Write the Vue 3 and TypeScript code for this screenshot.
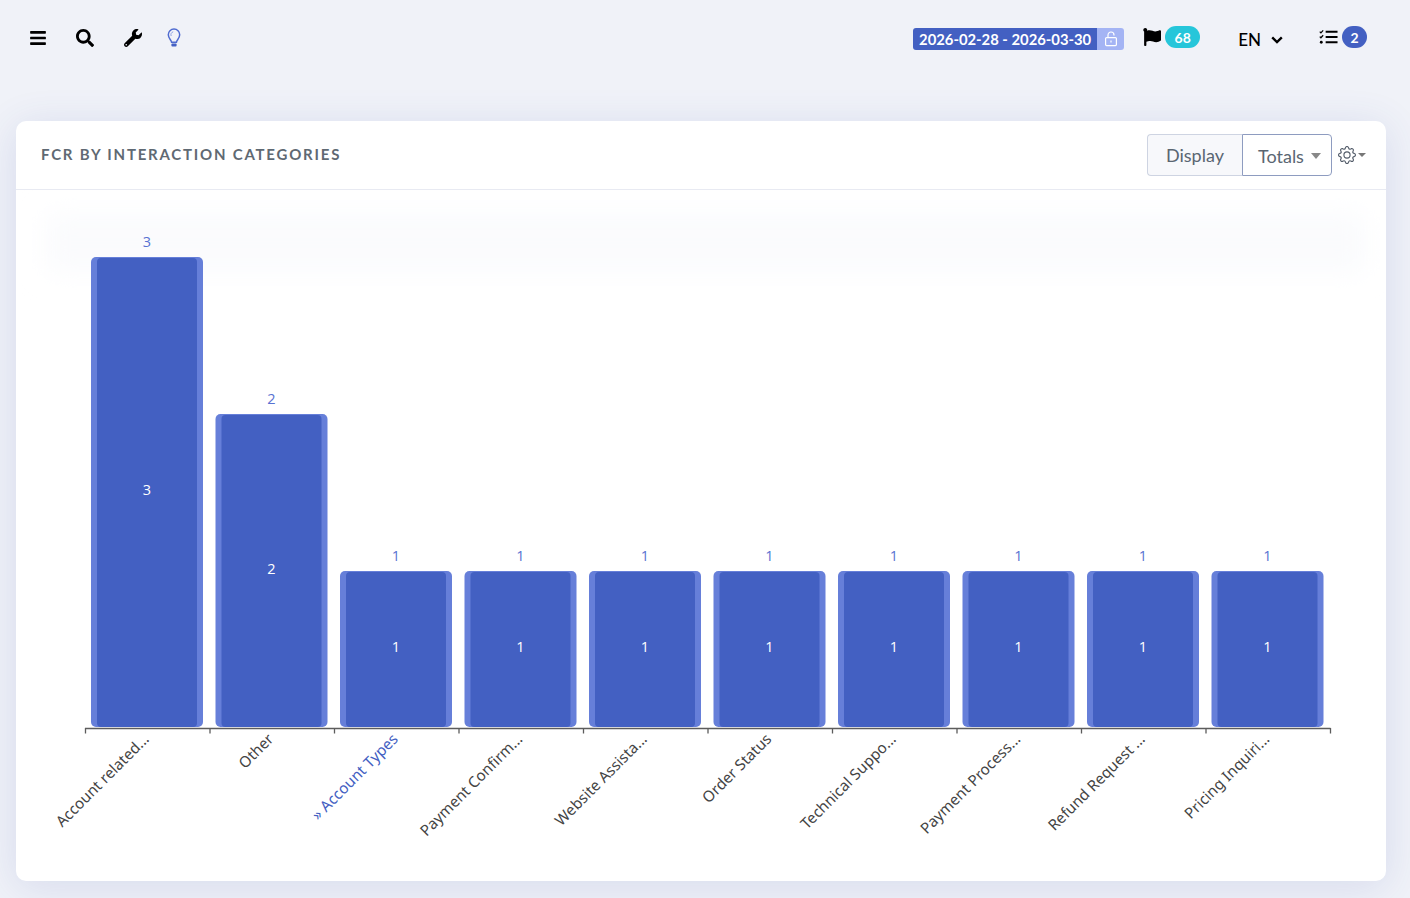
<template>
  <div class="page">
    <header class="topbar">
      <div class="tools">
        <svg class="ico" width="16" height="18" viewBox="0 0 448 512"><path :d="icons.bars" /></svg>
        <svg class="ico" width="18" height="18" viewBox="0 0 512 512"><path :d="icons.search" /></svg>
        <svg class="ico" width="18" height="18" viewBox="0 0 512 512"><path :d="icons.wrench" /></svg>
        <svg class="ico bulb" width="14" height="20" viewBox="0 0 14 20" fill="none">
          <path d="M4.6 14.2c0-2-3.3-3.6-3.3-7.4a5.7 5.7 0 0 1 11.4 0c0 3.8-3.3 5.4-3.3 7.4z" stroke="#4f6bd0" stroke-width="1.5" />
          <path d="M4.2 8a3 3 0 0 1 2-4.2" stroke="#8fa2e4" stroke-width="1" />
          <rect x="4.4" y="15.4" width="5.2" height="3" rx="1" fill="#4460c4" />
        </svg>
      </div>
      <div class="status">
        <div class="range">
          <span class="range-text">2026-02-28 - 2026-03-30</span>
          <span class="range-lock">
            <svg width="14" height="16" viewBox="0 0 14 16" fill="none" stroke="#fff" stroke-width="1.2">
              <rect x="1.6" y="6.6" width="10.8" height="8" rx="1" />
              <path d="M4 6.6V4a3 3 0 0 1 6 0v.6" />
              <path d="M7 9.6v2" />
            </svg>
          </span>
        </div>
        <div class="flag">
          <svg class="flag-ico" width="20" height="18" viewBox="0 0 512 512"><path :d="icons.flag" /></svg>
          <span class="pill teal">68</span>
        </div>
        <div class="lang">
          <span>EN</span>
          <svg width="12" height="8" viewBox="0 0 12 8" fill="none" stroke="#000" stroke-width="2.4"><path d="M1.2 1.4 6 6l4.8-4.6" /></svg>
        </div>
        <div class="todo">
          <svg class="todo-ico" width="19" height="16" viewBox="0 0 20 16" fill="none" stroke="#000">
            <path d="M7 2.5h12.5M7 8h12.5M7 13.5h12.5" stroke-width="2" />
            <path d="M.8 2.4 2 3.6 4.4 1M.8 7.6 2 8.8l2.4-2.6" stroke-width="1.3" />
            <circle cx="2.4" cy="13.5" r="1.5" fill="#000" stroke="none" />
          </svg>
          <span class="pill blue">2</span>
        </div>
      </div>
    </header>

    <section class="card">
      <div class="card-head">
        <h3 class="card-title">FCR BY INTERACTION CATEGORIES</h3>
        <div class="head-actions">
          <div class="display-group">
            <span class="display-label">Display</span>
            <span class="display-select">Totals<i class="caret big"></i></span>
          </div>
          <div class="gear">
            <svg width="18" height="18" viewBox="0 0 16 16" fill="#555e6b">
              <path :d="icons.gearInner" />
              <path :d="icons.gearOuter" />
            </svg>
            <i class="caret"></i>
          </div>
        </div>
      </div>
      <div class="card-body">
        <svg class="chart" width="1370" height="691" viewBox="0 0 1370 691">
          <defs>
            <filter id="band-blur" x="-5%" y="-50%" width="110%" height="200%">
              <feGaussianBlur stdDeviation="14" />
            </filter>
          </defs>
          <rect x="30" y="24" width="1320" height="58" fill="#fafbfd" filter="url(#band-blur)" />
          <g v-for="b in bars" :key="b.label">
            <rect :x="b.x" :y="b.y" width="112" :height="b.h" rx="5" fill="#667fd9" />
            <rect :x="b.x + 6" :y="b.y + 1" width="100" :height="b.h - 1" rx="4" fill="#4360c2" />
            <text class="val-top" :x="b.x + 56" :y="b.y - 10" text-anchor="middle">{{ b.value }}</text>
            <text class="val-in" :x="b.x + 56" :y="b.y + b.h / 2 + 3" text-anchor="middle">{{ b.value }}</text>
            <text
              class="cat"
              :class="{ link: b.link }"
              text-anchor="end"
              :transform="`translate(${b.x + 59} 550) rotate(-45)`"
            >{{ b.label }}</text>
          </g>
          <path class="axis" :d="axisPath" />
        </svg>
      </div>
    </section>
  </div>
</template>

<script setup lang="ts">
interface Row {
  label: string
  value: number
  link?: boolean
}

const rows: Row[] = [
  { label: 'Account related...', value: 3 },
  { label: 'Other', value: 2 },
  { label: '» Account Types', value: 1, link: true },
  { label: 'Payment Confirm...', value: 1 },
  { label: 'Website Assista...', value: 1 },
  { label: 'Order Status', value: 1 },
  { label: 'Technical Suppo...', value: 1 },
  { label: 'Payment Process...', value: 1 },
  { label: 'Refund Request ...', value: 1 },
  { label: 'Pricing Inquiri...', value: 1 }
]

const pitch = 124.5
const base = 537
const unit = 157

const bars = rows.map((r, i) => {
  const h = r.value * unit - 1
  return { ...r, x: 75 + i * pitch, y: base - h, h }
})

const axisPath =
  'M69 538.5H1314.5' +
  Array.from({ length: 11 }, (_, i) => `M${69.5 + i * pitch} 538V543.5`).join('')

const icons = {
  bars: 'M16 132h416c8.837 0 16-7.163 16-16V76c0-8.837-7.163-16-16-16H16C7.163 60 0 67.163 0 76v40c0 8.837 7.163 16 16 16zm0 160h416c8.837 0 16-7.163 16-16v-40c0-8.837-7.163-16-16-16H16c-8.837 0-16 7.163-16 16v40c0 8.837 7.163 16 16 16zm0 160h416c8.837 0 16-7.163 16-16v-40c0-8.837-7.163-16-16-16H16c-8.837 0-16 7.163-16 16v40c0 8.837 7.163 16 16 16z',
  search: 'M505 442.7L405.3 343c-4.5-4.5-10.6-7-17-7H372c27.6-35.3 44-79.7 44-128C416 93.1 322.9 0 208 0S0 93.1 0 208s93.1 208 208 208c48.3 0 92.7-16.4 128-44v16.3c0 6.4 2.5 12.5 7 17l99.7 99.7c9.4 9.4 24.6 9.4 33.9 0l28.3-28.3c9.4-9.4 9.4-24.6.1-34zM208 336c-70.7 0-128-57.2-128-128 0-70.7 57.2-128 128-128 70.7 0 128 57.2 128 128 0 70.7-57.2 128-128 128z',
  wrench: 'M507.73 109.1c-2.24-9.03-13.54-12.09-20.12-5.51l-74.36 74.36-67.88-11.31-11.31-67.88 74.36-74.36c6.62-6.62 3.43-17.9-5.66-20.16-47.38-11.74-99.55.91-136.58 37.93-39.64 39.64-50.55 97.1-34.05 147.2L18.74 402.76c-24.99 24.99-24.99 65.51 0 90.5 24.99 24.99 65.51 24.99 90.5 0l213.21-213.21c50.12 16.71 107.47 5.68 147.37-34.22 37.07-37.07 49.7-89.32 37.91-136.73zM64 472c-13.25 0-24-10.75-24-24 0-13.26 10.75-24 24-24s24 10.74 24 24c0 13.25-10.75 24-24 24z',
  flag: 'M349.565 98.783C295.978 98.783 251.721 64 184.348 64c-24.955 0-47.309 4.384-68.045 12.013a55.947 55.947 0 0 0 3.586-23.562C118.117 24.015 94.806 1.206 66.338.048 34.345-1.254 8 24.296 8 56c0 19.026 9.497 35.825 24 45.945V488c0 13.255 10.745 24 24 24h16c13.255 0 24-10.745 24-24v-94.4c28.311-12.064 63.582-22.122 114.435-22.122 53.588 0 97.844 34.783 165.217 34.783 48.169 0 86.667-16.294 122.505-40.858C506.84 359.452 512 349.571 512 339.045v-243.1c0-23.393-24.269-38.87-45.485-29.016-34.338 15.948-76.454 31.854-116.95 31.854z',
  gearInner: 'M8 4.754a3.246 3.246 0 1 0 0 6.492 3.246 3.246 0 0 0 0-6.492zM5.754 8a2.246 2.246 0 1 1 4.492 0 2.246 2.246 0 0 1-4.492 0z',
  gearOuter: 'M9.796 1.343c-.527-1.79-3.065-1.79-3.592 0l-.094.319a.873.873 0 0 1-1.255.52l-.292-.16c-1.64-.892-3.433.902-2.54 2.541l.159.292a.873.873 0 0 1-.52 1.255l-.319.094c-1.79.527-1.79 3.065 0 3.592l.319.094a.873.873 0 0 1 .52 1.255l-.16.292c-.892 1.64.901 3.434 2.541 2.54l.292-.159a.873.873 0 0 1 1.255.52l.094.319c.527 1.79 3.065 1.79 3.592 0l.094-.319a.873.873 0 0 1 1.255-.52l.292.16c1.64.893 3.434-.902 2.54-2.541l-.159-.292a.873.873 0 0 1 .52-1.255l.319-.094c1.79-.527 1.79-3.065 0-3.592l-.319-.094a.873.873 0 0 1-.52-1.255l.16-.292c.893-1.64-.902-3.433-2.541-2.54l-.292.159a.873.873 0 0 1-1.255-.52l-.094-.319zm-2.633.283c.246-.835 1.428-.835 1.674 0l.094.319a1.873 1.873 0 0 0 2.693 1.115l.291-.16c.764-.415 1.6.42 1.184 1.185l-.159.292a1.873 1.873 0 0 0 1.116 2.692l.318.094c.835.246.835 1.428 0 1.674l-.319.094a1.873 1.873 0 0 0-1.115 2.693l.16.291c.415.764-.42 1.6-1.185 1.184l-.291-.159a1.873 1.873 0 0 0-2.693 1.116l-.094.318c-.246.835-1.428.835-1.674 0l-.094-.319a1.873 1.873 0 0 0-2.692-1.115l-.292.16c-.764.415-1.6-.42-1.184-1.185l.159-.291A1.873 1.873 0 0 0 1.945 8.93l-.319-.094c-.835-.246-.835-1.428 0-1.674l.319-.094A1.873 1.873 0 0 0 3.06 4.377l-.16-.292c-.415-.764.42-1.6 1.185-1.184l.292.159a1.873 1.873 0 0 0 2.692-1.115l.094-.319z'
}
</script>

<style>
html,
body {
  margin: 0;
  background: #f0f2f8;
  overflow: hidden;
}
</style>

<style scoped>
.page {
  height: 898px;
  padding: 0 24px 0 16px;
  box-sizing: border-box;
  font-family: Lato, "Open Sans", sans-serif;
  background: #f0f2f8;
}

.topbar {
  height: 121px;
  display: flex;
  justify-content: space-between;
  align-items: flex-start;
}

.tools {
  display: flex;
  align-items: center;
  gap: 30px;
  padding: 27px 0 0 14px;
}

.bulb {
  margin: 1px 0 0 -5px;
}

.status {
  display: flex;
  align-items: center;
  padding: 24px 19px 0 0;
}

.range {
  display: flex;
  height: 22px;
  margin-top: 4px;
  border-radius: 3px;
  overflow: hidden;
  color: #fff;
  font-size: 14.8px;
  font-weight: 700;
}

.range-text {
  display: flex;
  align-items: center;
  padding: 0 6px 1px;
  background: #4360c2;
}

.range-lock {
  width: 27px;
  display: flex;
  align-items: center;
  justify-content: center;
  background: #a4b4f4;
}

.flag {
  display: flex;
  align-items: center;
  gap: 3px;
  margin-left: 18px;
}

.flag-ico {
  margin-top: -1px;
}

.pill {
  height: 22px;
  display: flex;
  align-items: center;
  justify-content: center;
  border-radius: 11px;
  color: #fff;
  font-size: 14px;
  font-weight: 700;
}

.teal {
  width: 35px;
  background: #26c6da;
}

.blue {
  width: 25px;
  background: #4360c2;
}

.lang {
  display: flex;
  align-items: center;
  gap: 10px;
  margin: 5px 0 0 38px;
  color: #000;
  font-size: 17px;
  font-weight: 500;
}

.todo {
  display: flex;
  align-items: center;
  gap: 4px;
  margin-left: 36px;
}

.todo-ico {
  margin-top: -1px;
}

.card {
  height: 760px;
  border-radius: 10px;
  background: #fff;
  box-shadow: 0 6px 40px rgba(60, 80, 170, 0.14);
  overflow: hidden;
}

.card-head {
  display: flex;
  align-items: center;
  justify-content: space-between;
  padding: 0 20px 2px 25px;
  box-sizing: content-box;
  height: 66px;
  border-bottom: 1px solid #e8eaf2;
}

.card-title {
  margin: 0;
  color: #5f6973;
  font-size: 15px;
  font-weight: 700;
  letter-spacing: 1.78px;
}

.head-actions {
  display: flex;
  align-items: center;
  gap: 6px;
  margin-top: 2px;
}

.display-group {
  display: flex;
  height: 42px;
  color: #5a6672;
  font-size: 18px;
}

.display-label {
  width: 95px;
  display: flex;
  align-items: center;
  justify-content: center;
  box-sizing: border-box;
  background: #f7f8fb;
  border: 1px solid #ced4e2;
  border-right: 0;
  border-radius: 4px 0 0 4px;
}

.display-select {
  width: 90px;
  display: flex;
  align-items: center;
  padding-left: 15px;
  padding-top: 2px;
  box-sizing: border-box;
  background: #fff;
  border: 1px solid #8e9cc0;
  border-radius: 0 4px 4px 0;
}

.caret {
  display: inline-block;
  width: 0;
  height: 0;
  border-left: 4px solid transparent;
  border-right: 4px solid transparent;
  border-top: 4px solid #777;
}

.caret.big {
  margin-left: 7px;
  border-left-width: 5px;
  border-right-width: 5px;
  border-top-width: 6px;
  border-top-color: #888;
}

.gear {
  display: flex;
  align-items: center;
  gap: 2px;
}

.card-body {
  height: 691px;
}

.chart {
  display: block;
}

.val-top {
  fill: #5872d2;
  font-family: "Open Sans", sans-serif;
  font-size: 14.5px;
}

.val-in {
  fill: #fff;
  font-family: "Open Sans", sans-serif;
  font-size: 14.5px;
  font-weight: 500;
}

.cat {
  fill: #444;
  font-family: "Noto Sans", "Open Sans", sans-serif;
  font-size: 15.2px;
}

.cat.link {
  fill: #4360c2;
}

.axis {
  fill: none;
  stroke: #5c5c5c;
  stroke-width: 1.3;
}
</style>
